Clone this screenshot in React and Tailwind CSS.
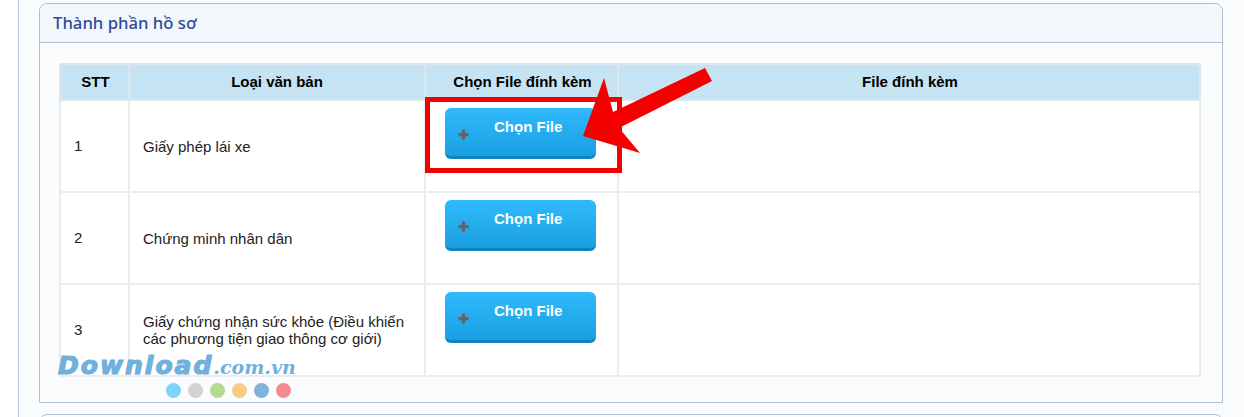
import React from "react";
import { Plus } from "lucide-react";

const rows = [
  { id: 1, name: "Giấy phép lái xe" },
  { id: 2, name: "Chứng minh nhân dân" },
  { id: 3, name: "Giấy chứng nhận sức khỏe (Điều khiển các phương tiện giao thông cơ giới)" },
];

const dots = ["bg-[#7dd3fa]", "bg-[#d3d3d3]", "bg-[#b5d98f]", "bg-[#fbcb85]", "bg-[#7fb2dc]", "bg-[#f58b90]"];

const ChooseButton = () => (
  <button className="flex h-[51px] w-[151px] rounded-[6px] border-b-[3px] border-[#0f83bd] bg-gradient-to-b from-[#2fbafc] to-[#1a9fe2] pl-[12px] text-left text-[15px] font-bold text-white">
    <Plus size={13} strokeWidth={6} className="mt-[20px] text-[#66626c]" />
    <span className="ml-[24px] mt-[8px]">Chọn File</span>
  </button>
);

const App = () => {
  return (
    <div className="relative flex h-[417px] w-full overflow-hidden bg-[#fafbfc] font-['Liberation_Sans',Arial,sans-serif]">
      <div className="w-[19px] shrink-0 border-r border-[#b9c5de] bg-white" />

      <div className="w-[1204px] shrink-0 pl-[20px] pt-[3px]">
        <div className="h-[400px] rounded-t-[8px] border border-[#aebcd6] bg-[#fbfcfd]">
          <div className="flex h-[39px] items-center rounded-t-[8px] border-b border-[#aebcd6] bg-[#f2f7fb] pl-[13px] font-['Noto_Sans',sans-serif] text-[16.7px] font-medium text-[#2f4a9c]">
            Thành phần hồ sơ
          </div>

          <div className="pl-[19px] pt-[20px]">
            <table className="w-[1142px] table-fixed border-collapse text-[15px] text-[#222]">
              <colgroup>
                <col className="w-[69px]" />
                <col className="w-[296px]" />
                <col className="w-[193px]" />
                <col />
              </colgroup>
              <thead className="bg-[#c5e3f2] text-black">
                <tr className="h-[36px]">
                  <th className="border-2 border-[#dbe7ec] pl-[2px] font-bold">STT</th>
                  <th className="border-2 border-[#dbe7ec] font-bold">Loại văn bản</th>
                  <th className="border-2 border-[#dbe7ec] pl-[2px] font-bold">Chọn File đính kèm</th>
                  <th className="border-2 border-[#dbe7ec] pl-[2px] font-bold">File đính kèm</th>
                </tr>
              </thead>
              <tbody className="bg-white">
                {rows.map((row) => (
                  <tr key={row.id} className="h-[92px]">
                    <td className="border-2 border-[#e8edef] pl-[13px]">{row.id}</td>
                    <td className="border-2 border-[#e8edef] pl-[13px] pr-[14px] leading-[17px]">{row.name}</td>
                    <td className="border-2 border-[#e8edef] pl-[19px] pt-[7px] align-top">
                      <ChooseButton />
                    </td>
                    <td className="border-2 border-[#e8edef]" />
                  </tr>
                ))}
              </tbody>
            </table>
          </div>
        </div>

        <div className="mt-[11px] h-[20px] rounded-t-[8px] border border-[#aebcd6] bg-[#fbfcfd]" />
      </div>

      {/* annotation over the first row */}
      <div className="absolute left-[425px] top-[97px] h-[76px] w-[197px] border-[5px] border-[#f40000]" />
      <svg className="absolute left-0 top-0" width="1244" height="417">
        <polygon points="583,136 604,78 613,112 705,68 712,81 619,128 640,153" fill="#f40000" />
      </svg>

      {/* watermark */}
      <div className="absolute left-[58px] top-[347px] flex items-baseline whitespace-nowrap italic text-[#6fb0dc]">
        <span className="font-['DejaVu_Sans',sans-serif] text-[25px] font-bold tracking-[2px] [-webkit-text-stroke:1.2px_#6fb0dc]">Download</span>
        <span className="font-['DejaVu_Serif',serif] text-[19px] font-bold">.com.vn</span>
      </div>
      <div className="absolute left-[166px] top-[383px] flex gap-[7px]">
        {dots.map((color) => (
          <span key={color} className={`h-[15px] w-[15px] rounded-full ${color}`} />
        ))}
      </div>
    </div>
  );
};

export default App;
